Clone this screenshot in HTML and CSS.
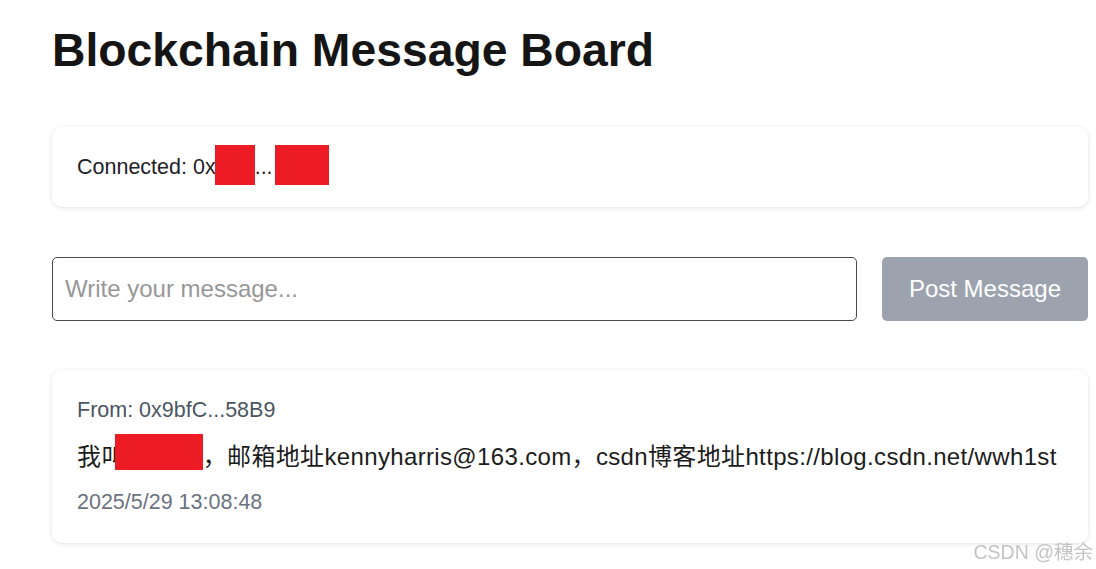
FILE: index.html
```html
<!DOCTYPE html>
<html lang="en">
<head>
<meta charset="utf-8">
<title>Blockchain Message Board</title>
<link rel="stylesheet" href="styles.css">
</head>
<body>
<main class="board">
  <h1 class="title">Blockchain Message Board</h1>

  <section class="card status">
    <span>Connected: 0x</span><span class="redact redact-a"></span><span>...</span><span class="redact redact-b"></span>
  </section>

  <form class="composer">
    <input class="composer-input" type="text" placeholder="Write your message...">
    <button class="composer-btn" type="button" disabled>Post Message</button>
  </form>

  <ul class="messages">
    <li class="card message">
      <p class="message-from">From: 0x9bfC...58B9</p>
      <p class="message-text">我叫<span class="redact redact-name"></span>，邮箱地址kennyharris@163.com，csdn博客地址https://blog.csdn.net/wwh1st</p>
      <p class="message-time">2025/5/29 13:08:48</p>
    </li>
  </ul>
</main>
<div class="watermark">CSDN @穗余</div>
</body>
</html>
```

FILE: styles.css
```css
* {
  box-sizing: border-box;
}

html, body {
  margin: 0;
  padding: 0;
  background: #ffffff;
}

body {
  font-family: "Liberation Sans", Arial, "Noto Sans CJK SC", sans-serif;
  color: #1f1f1f;
  min-height: 569px;
}

.board {
  padding: 23px 8px 0 52px;
  display: flex;
  flex-direction: column;
  gap: 50px;
}

.title {
  margin: 0;
  font-size: 46.3px;
  font-weight: 700;
  line-height: normal;
  color: #151515;
}

.card {
  background: #ffffff;
  border-radius: 10px;
  box-shadow: 0 1px 5px rgba(0, 0, 0, 0.12);
}

.status {
  padding: 27.5px 25px;
  font-size: 21.5px;
  color: #1f2227;
  line-height: normal;
}

.redact {
  display: inline-block;
  background: #ed1c24;
  height: 40px;
  margin: -10px 0 -8px;
  vertical-align: -3px;
}

.redact-a {
  width: 40px;
  margin-left: -1px;
}

.redact-b {
  width: 54px;
  margin-left: 2px;
}

.composer {
  display: flex;
  gap: 25px;
  margin: 0;
}

.composer-input {
  flex: 1;
  height: 64px;
  padding: 0 12px;
  border: 1px solid #4a4a4a;
  border-radius: 5px;
  font-family: inherit;
  font-size: 24px;
  color: #1f1f1f;
  background: #ffffff;
  outline: none;
}

.composer-input::placeholder {
  color: #979797;
}

.composer-btn {
  height: 64px;
  padding: 0 27px;
  border: none;
  border-radius: 5px;
  background: #9ca3af;
  color: #ffffff;
  font-family: inherit;
  font-size: 24px;
}

.messages {
  list-style: none;
  margin: -1px 0 0;
  padding: 0;
}

.message {
  padding: 27.5px 25px 28px;
}

.message p {
  margin: 0;
}

.message-from {
  font-size: 21.5px;
  color: #4b5563;
  line-height: normal;
}

.message-text {
  margin-top: 17.5px !important;
  font-size: 24px;
  line-height: 34px;
  letter-spacing: 0.35px;
  color: #1c1c1c;
}

.redact-name {
  width: 88px;
  height: 36px;
  margin: -6px 0 -4px -11px;
  vertical-align: -1px;
}

.message-time {
  margin-top: 16.3px !important;
  font-size: 21.5px;
  color: #6b7280;
  line-height: normal;
}

.watermark {
  position: fixed;
  right: 3px;
  bottom: 4px;
  font-size: 19.5px;
  color: #c4c4c4;
  font-family: "Liberation Sans", Arial, "Noto Sans CJK SC", sans-serif;
}
```
